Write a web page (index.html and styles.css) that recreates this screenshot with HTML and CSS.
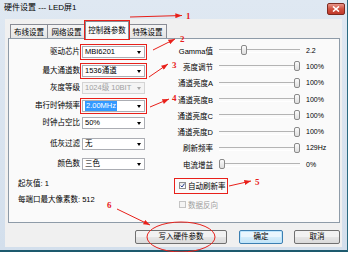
FILE: index.html
```html
<!DOCTYPE html>
<html lang="zh-CN">
<head>
    <meta charset="UTF-8">
    <meta name="viewport" content="width=device-width, initial-scale=1.0">
    <title>硬件设置</title>
    <link rel="stylesheet" href="styles.css">
</head>
<body>
    <div class="window">
        <div class="titlebar">
            <span class="title">硬件设置 --- LED屏1</span>
            <span class="close">
                <svg width="8" height="6" viewBox="0 0 8 6"><path d="M1 0.5 L7 5.5 M7 0.5 L1 5.5" stroke="#fff" stroke-width="1.6"/></svg>
            </span>
        </div>

        <div class="client">
            <div class="tabs">
                <div class="tab t1">布线设置</div>
                <div class="tab t2">网络设置</div>
                <div class="tab active mark">控制器参数</div>
                <div class="tab t4">特殊设置</div>
            </div>

            <div class="panel">
                <div class="col-left">
                    <div class="form">
                        <label>驱动芯片</label>
                        <div class="combo mark">MBI6201</div>
                        <label>最大通道数</label>
                        <div class="combo mark">1536通道</div>
                        <label>灰度等级</label>
                        <div class="combo disabled">1024级 10BIT</div>
                        <label>串行时钟频率</label>
                        <div class="combo mark"><span class="sel">2.00MHz</span></div>
                        <label>时钟占空比</label>
                        <div class="combo">50%</div>
                        <label>低灰过滤</label>
                        <div class="combo">无</div>
                        <label>颜色数</label>
                        <div class="combo">三色</div>
                    </div>
                    <p class="info">起灰值: 1</p>
                    <p class="info second">每端口最大像素数: 512</p>
                </div>

                <div class="col-right">
                    <div class="sliders">
                        <div class="srow"><label>Gamma值</label><div class="track"><span class="thumb" style="--v:0.29"></span></div><span class="val">2.2</span></div>
                        <div class="srow"><label>亮度调节</label><div class="track"><span class="thumb" style="--v:1"></span></div><span class="val">100%</span></div>
                        <div class="srow"><label>通道亮度A</label><div class="track"><span class="thumb" style="--v:1"></span></div><span class="val">100%</span></div>
                        <div class="srow"><label>通道亮度B</label><div class="track"><span class="thumb" style="--v:1"></span></div><span class="val">100%</span></div>
                        <div class="srow"><label>通道亮度C</label><div class="track"><span class="thumb" style="--v:1"></span></div><span class="val">100%</span></div>
                        <div class="srow"><label>通道亮度D</label><div class="track"><span class="thumb" style="--v:1"></span></div><span class="val">100%</span></div>
                        <div class="srow"><label>刷新频率</label><div class="track"><span class="thumb" style="--v:1"></span></div><span class="val">129Hz</span></div>
                        <div class="srow"><label>电流增益</label><div class="track"><span class="thumb" style="--v:0"></span></div><span class="val">0%</span></div>
                    </div>
                    <div class="check mark">
                        <span class="box"><svg width="5" height="5" viewBox="0 0 5 5"><path d="M0.6 2.6 L2 4 L4.5 0.6" stroke="#2a3f8f" stroke-width="1" fill="none"/></svg></span>
                        自动刷新率
                    </div>
                    <div class="check disabled"><span class="box"></span>数据反向</div>
                </div>
            </div>

            <div class="buttons">
                <button class="write">写入硬件参数</button>
                <button class="ok">确定</button>
                <button class="cancel">取消</button>
            </div>
        </div>

        <!-- 标注 -->
        <svg class="notes" width="352" height="256" viewBox="0 0 352 256">
            <defs>
                <marker id="ah" viewBox="0 0 8 6" refX="8" refY="3" markerWidth="7" markerHeight="5" markerUnits="userSpaceOnUse" orient="auto">
                    <path d="M0 0 L8 3 L0 6 Z" fill="#e8201a"/>
                </marker>
            </defs>
            <g stroke="#e8201a" stroke-width="1" fill="none">
                <line x1="130" y1="17" x2="182" y2="15.5" marker-end="url(#ah)"/>
                <line x1="153" y1="50" x2="175" y2="39" marker-end="url(#ah)"/>
                <line x1="149" y1="77" x2="168" y2="64" marker-end="url(#ah)"/>
                <line x1="150" y1="107" x2="169" y2="99" marker-end="url(#ah)"/>
                <line x1="229" y1="186" x2="251" y2="181" marker-end="url(#ah)"/>
                <line x1="117" y1="209" x2="150" y2="225" marker-end="url(#ah)"/>
                <ellipse cx="181" cy="237" rx="34" ry="15"/>
            </g>
            <g class="num">
                <text x="186" y="19">1</text>
                <text x="180" y="42">2</text>
                <text x="172" y="68">3</text>
                <text x="172" y="101">4</text>
                <text x="255" y="185">5</text>
                <text x="107" y="208">6</text>
            </g>
        </svg>
    </div>
</body>
</html>
```

FILE: styles.css
```css
* {
    box-sizing: border-box;
}

body {
    margin: 0;
    background: #fff;
    font-family: "Liberation Sans", "Noto Sans CJK SC", sans-serif;
    font-size: 7.5px;
    color: #000;
}

.window {
    position: relative;
    width: 348px;
    height: 252px;
    display: flex;
    flex-direction: column;
    background: linear-gradient(#dfe8f2, #d3dfec);
    border-right: 1px solid #2b6a80;
    border-bottom: 2px solid #1d5a6e;
}

/* 标题栏 */
.titlebar {
    height: 19px;
    flex: none;
    display: flex;
    justify-content: space-between;
    align-items: flex-start;
    padding: 3px 2px 0 4px;
}

.title {
    font-size: 8px;
    line-height: 9px;
}

.close {
    width: 18px;
    height: 12px;
    display: flex;
    align-items: center;
    justify-content: center;
    border: 1px solid #7d2a20;
    border-radius: 2px;
    background: linear-gradient(#e8958a, #d0513f 50%, #c0392b);
}

/* 客户区 */
.client {
    flex: 1;
    margin: 0 5px 3px 5px;
    padding: 2px 2px 0 3px;
    background: #f0f0f0;
    display: flex;
    flex-direction: column;
}

.tabs {
    height: 17px;
    display: flex;
    align-items: flex-end;
    padding-left: 2px;
}

.tab {
    height: 14px;
    width: 39px;
    margin-left: -1px;
    display: flex;
    align-items: center;
    justify-content: center;
    white-space: nowrap;
    border: 1px solid #898c95;
    border-bottom: none;
    background: linear-gradient(#f4f4f4, #e4e4e4);
}

.tab.t1 {
    width: 38px;
    margin-left: 0;
}

.tab.active {
    position: relative;
    z-index: 1;
    width: 44px;
    height: 18px;
    margin-bottom: -1px;
    padding-bottom: 2px;
    background: #fafafa;
}

.mark {
    outline: 1px solid #e8201a;
}

.panel {
    height: 185px;
    display: flex;
    border: 1px solid #8e9ba8;
    background: #fafafa;
}

/* 左列 */
.col-left {
    width: 166px;
    flex: none;
}

.form {
    display: grid;
    grid-template-columns: 71px 63px;
    grid-template-rows: 19px 16.5px 18px 17px 21.5px 19.5px 12px;
    column-gap: 2px;
    align-items: start;
    padding-top: 7px;
}

.form label {
    line-height: 12px;
    text-align: right;
    white-space: nowrap;
}

.combo {
    position: relative;
    height: 12px;
    line-height: 10px;
    padding-left: 2px;
    border: 1px solid #abadb3;
    background: #fff;
    white-space: nowrap;
    overflow: hidden;
}

.combo::after {
    content: "";
    position: absolute;
    right: 3px;
    top: 4px;
    border-left: 2.5px solid transparent;
    border-right: 2.5px solid transparent;
    border-top: 3px solid #000;
}

.combo.mark {
    outline-offset: 1px;
}

.combo.disabled {
    color: #a0a0a0;
    background: #f4f4f4;
    border-color: #d4d4d4;
}

.combo.disabled::after {
    border-top-color: #a6a6a6;
}

.sel {
    display: inline-block;
    padding: 0 1px;
    background: #3399ff;
    color: #fff;
}

.info {
    margin: 8.5px 0 0 9px;
    line-height: 12px;
}

.info.second {
    margin-top: 4px;
}

/* 右列 */
.col-right {
    flex: 1;
    padding-top: 3px;
}

.srow {
    height: 16.3px;
    display: flex;
    align-items: center;
}

.srow label {
    width: 38px;
    text-align: right;
    white-space: nowrap;
}

.track {
    position: relative;
    width: 81px;
    height: 12px;
    margin-left: 6px;
}

.track::before {
    content: "";
    position: absolute;
    left: 0;
    right: 0;
    top: 5px;
    height: 2px;
    border-top: 1px solid #b4b4b4;
    border-bottom: 1px solid #fff;
}

.thumb {
    position: absolute;
    top: 1px;
    left: calc(var(--v) * (100% - 6px));
    width: 6px;
    height: 10px;
    border: 1px solid #8a8a8a;
    border-radius: 2px;
    background: linear-gradient(#fbfbfb, #dedede);
}

.val {
    margin-left: 6px;
    font-size: 7px;
}

.check {
    width: 52px;
    height: 14px;
    margin-top: 6.5px;
    padding-left: 4px;
    display: flex;
    align-items: center;
    gap: 2px;
    white-space: nowrap;
}

.check.disabled {
    margin-top: 5px;
    color: #a0a0a0;
}

.box {
    width: 7px;
    height: 7px;
    display: flex;
    align-items: center;
    justify-content: center;
    border: 1px solid #8e8f8f;
    background: linear-gradient(#e6e6e6, #fff);
}

.check.disabled .box {
    border-color: #c4c4c4;
    background: #f4f4f4;
}

/* 按钮 */
.buttons {
    display: flex;
    justify-content: flex-end;
    margin-top: 7px;
}

button {
    height: 14px;
    padding: 0;
    font: inherit;
    line-height: 12px;
    color: #000;
    border: 1px solid #707070;
    border-radius: 2px;
    background: linear-gradient(#f2f2f2 50%, #e6e6e6 50%, #dadada);
}

.write {
    width: 92px;
    margin-right: 12px;
}

.ok {
    width: 44px;
    margin-right: 11px;
    border-color: #3c7fb1;
    background: linear-gradient(#eaf6fd 50%, #d4edfb 50%, #c2e4f6);
    box-shadow: inset 0 0 0 1px #bfe6fc;
}

.cancel {
    width: 46px;
}

/* 标注层 */
.notes {
    position: absolute;
    left: 0;
    top: 0;
    pointer-events: none;
}

.num text {
    fill: #e8201a;
    font-family: "Liberation Serif", serif;
    font-weight: bold;
    font-size: 9px;
}
```
